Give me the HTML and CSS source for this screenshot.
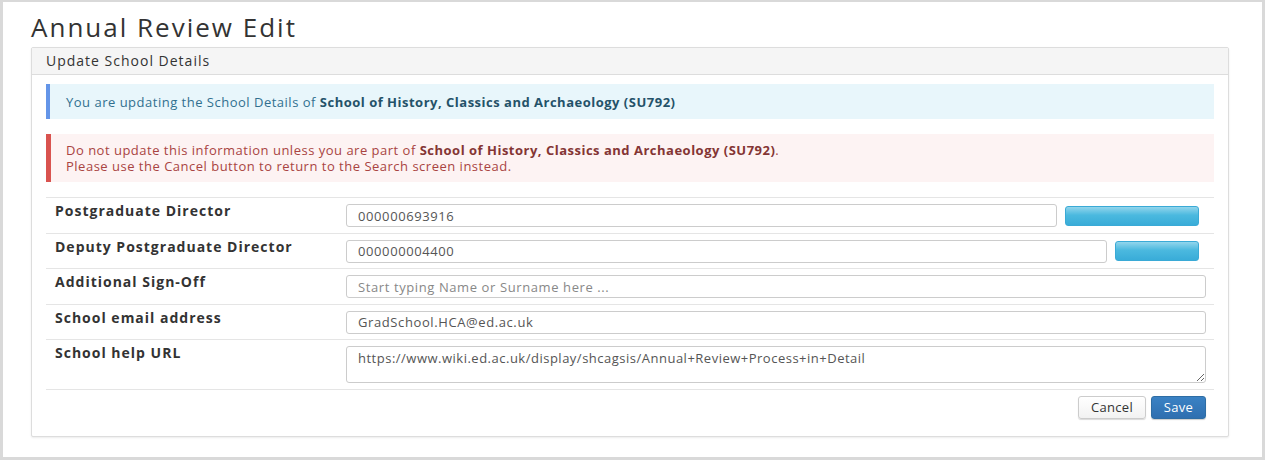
FILE: index.html
```html
<!DOCTYPE html>
<html lang="en">

<head>
    <meta charset="UTF-8">
    <meta name="viewport" content="width=device-width, initial-scale=1.0">
    <title>Annual Review Edit</title>
    <link rel="stylesheet" href="styles.css">
</head>

<body>
    <div class="frame">
        <h1 class="page-title">Annual Review Edit</h1>

        <!-- School details panel -->
        <div class="panel">
            <div class="panel-heading">Update School Details</div>
            <div class="panel-body">
                <div class="callout callout-info">
                    You are updating the School Details of <b>School of History, Classics and Archaeology (SU792)</b>
                </div>
                <div class="callout callout-danger">
                    Do not update this information unless you are part of <b>School of History, Classics and Archaeology (SU792)</b>.<br>
                    Please use the Cancel button to return to the Search screen instead.
                </div>

                <div class="form-table">
                    <div class="form-row">
                        <label class="form-label">Postgraduate Director</label>
                        <div class="form-field with-button">
                            <input class="form-input" type="text" value="000000693916">
                            <button class="btn-lookup wide" type="button"></button>
                        </div>
                    </div>
                    <div class="form-row">
                        <label class="form-label">Deputy Postgraduate Director</label>
                        <div class="form-field with-button">
                            <input class="form-input" type="text" value="000000004400">
                            <button class="btn-lookup" type="button"></button>
                        </div>
                    </div>
                    <div class="form-row">
                        <label class="form-label">Additional Sign-Off</label>
                        <div class="form-field">
                            <input class="form-input" type="text" placeholder="Start typing Name or Surname here ...">
                        </div>
                    </div>
                    <div class="form-row">
                        <label class="form-label">School email address</label>
                        <div class="form-field">
                            <input class="form-input" type="text" value="GradSchool.HCA@ed.ac.uk">
                        </div>
                    </div>
                    <div class="form-row">
                        <label class="form-label">School help URL</label>
                        <div class="form-field">
                            <textarea class="form-input form-textarea">https://www.wiki.ed.ac.uk/display/shcagsis/Annual+Review+Process+in+Detail</textarea>
                        </div>
                    </div>
                </div>

                <div class="form-actions">
                    <button class="btn btn-default" type="button">Cancel</button>
                    <button class="btn btn-primary" type="button">Save</button>
                </div>
            </div>
        </div>
    </div>
</body>

</html>
```

FILE: styles.css
```css
html,
body {
    margin: 0;
    padding: 0;
}

body {
    font-family: "Open Sans", "Liberation Sans", sans-serif;
    font-size: 13px;
    letter-spacing: 0.5px;
    color: #333;
    background-color: #fff;
}

/* Grey frame around the whole screen */
.frame {
    box-sizing: border-box;
    height: 460px;
    border-style: solid;
    border-color: #d9d9d9;
    border-width: 2px 3px 3px 3px;
    padding: 0 33px 0 28px;
    overflow: hidden;
}

.page-title {
    margin: 12px 0 6px 0;
    font-size: 26px;
    font-weight: 400;
    letter-spacing: 2px;
    line-height: 27px;
    color: #333;
}

/* Panel */
.panel {
    border: 1px solid #ddd;
    border-radius: 2px;
    background-color: #fff;
    box-shadow: 0 1px 2px rgba(0, 0, 0, 0.08);
}

.panel-heading {
    height: 26px;
    line-height: 26px;
    padding: 0 14px;
    font-size: 14px;
    letter-spacing: 1px;
    background-color: #f5f5f5;
    border-bottom: 1px solid #ddd;
}

.panel-body {
    padding: 9px 14px 17px 14px;
}

/* Alerts with a coloured left edge */
.callout {
    line-height: 16px;
}

.callout-info {
    padding: 10px 16px 9px 16px;
    background-color: #e8f6fb;
    border-left: 4px solid #6495e8;
    color: #31708f;
}

.callout-info b {
    color: #245269;
}

.callout-danger {
    margin-top: 15px;
    padding: 8px 15px;
    background-color: #fdf3f3;
    border-left: 5px solid #d9534f;
    color: #a94442;
}

.callout-danger b {
    color: #843534;
}

/* Form rows */
.form-table {
    margin-top: 15px;
    border-bottom: 1px solid #e5e5e5;
}

.form-row {
    display: grid;
    grid-template-columns: 300px 1fr;
    border-top: 1px solid #e5e5e5;
}

.form-label {
    padding: 3px 9px 6px 9px;
    font-size: 14px;
    font-weight: 700;
    letter-spacing: 1px;
    line-height: 20px;
    color: #333;
}

.form-field {
    padding: 6px 8px 5.5px 0;
}

.form-field.with-button {
    display: flex;
    align-items: center;
    gap: 8px;
    padding-right: 15px;
}

.form-input {
    box-sizing: border-box;
    display: block;
    width: 100%;
    height: 23px;
    margin: 0;
    padding: 0 11px;
    font-family: "Open Sans", "Liberation Sans", sans-serif;
    font-size: 13px;
    letter-spacing: 0.6px;
    color: #555;
    background-color: #fff;
    border: 1px solid #ccc;
    border-radius: 3px;
    outline: none;
}

.form-input::placeholder {
    color: #888;
}

.form-textarea {
    height: 37px;
    padding: 3px 11px;
    letter-spacing: 0.5px;
    line-height: 16px;
    resize: vertical;
}

.with-button .form-input {
    flex: 1;
}

.btn-lookup {
    flex: none;
    width: 84px;
    height: 20px;
    border: 1px solid #3aaad6;
    border-radius: 3px;
    background: linear-gradient(#92d5ec, #4bb9df 45%, #39acd8);
    cursor: pointer;
}

.btn-lookup.wide {
    width: 134px;
}

/* Bottom buttons */
.form-actions {
    display: flex;
    justify-content: flex-end;
    gap: 5px;
    padding: 6px 8px 0 0;
}

.btn {
    height: 23px;
    padding: 0;
    font-family: "Open Sans", "Liberation Sans", sans-serif;
    font-size: 13px;
    letter-spacing: 0.3px;
    border-radius: 3px;
    cursor: pointer;
}

.btn-default {
    width: 68px;
    color: #333;
    background: linear-gradient(#fff, #f2f2f2);
    border: 1px solid #ccc;
    box-shadow: 0 1px 1px rgba(0, 0, 0, 0.15);
}

.btn-primary {
    width: 55px;
    color: #fff;
    background: linear-gradient(#3a82c4, #2f6fb0);
    border: 1px solid #2e6da4;
    box-shadow: 0 1px 1px rgba(0, 0, 0, 0.2);
}
```
